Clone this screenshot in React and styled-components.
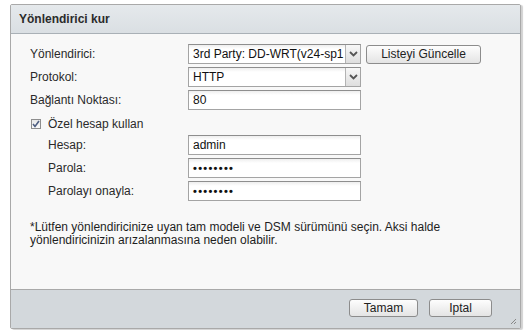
import React from "react";
import styled, { createGlobalStyle } from "styled-components";

const Global = createGlobalStyle`
  html, body { margin: 0; padding: 0; background: #ffffff; }
  body { font-family: "Liberation Sans", Arial, sans-serif; font-size: 12px; color: #222; }
`;

const Page = styled.div`
  width: 529px;
  height: 330px;
  padding: 4px 0 0 10px;
  box-sizing: border-box;
`;

const Window = styled.div`
  width: 511px;
  height: 325px;
  box-sizing: border-box;
  border: 1px solid #a9a9a9;
  border-radius: 2px;
  box-shadow: 2px 1px 1px rgba(0, 0, 0, 0.18);
  display: flex;
  flex-direction: column;
  background: #f8f8f8;
  overflow: hidden;
`;

const Header = styled.div`
  height: 29px;
  box-sizing: border-box;
  border-bottom: 1px solid #a9b0b6;
  background: linear-gradient(#e5e9ec, #dadfe3);
  display: flex;
  align-items: center;
  padding-left: 8px;
  font-weight: bold;
  font-size: 12px;
  color: #2b2b2b;
`;

const Body = styled.div`
  flex: 1;
  padding: 10px 0 0 19px;
  display: flex;
  flex-direction: column;
`;

const Row = styled.div`
  display: flex;
  align-items: center;
  height: 20px;
  margin-top: ${(p) => p.$mt ?? 3}px;
`;

const Label = styled.div`
  width: ${(p) => (p.$indent ? 140 : 158)}px;
  padding-left: ${(p) => (p.$indent ? 18 : 0)}px;
  color: #2a2a2a;
`;

const Field = styled.div`
  width: 173px;
  height: 20px;
  box-sizing: border-box;
  border: 1px solid #a4a4a4;
  border-top-color: #8e8e8e;
  background: linear-gradient(#eeeeee 0px, #ffffff 4px, #ffffff);
  display: flex;
  align-items: center;
  padding-left: 4px;
  color: #111;
  overflow: hidden;
  white-space: nowrap;
`;

const FieldText = styled.span`
  flex: 1;
  overflow: hidden;
`;

const Dots = styled.span`
  font-size: 11px;
  font-weight: bold;
  letter-spacing: 1.3px;
  color: #111;
`;

const Arrow = styled.div`
  width: 15px;
  height: 100%;
  box-sizing: border-box;
  border-left: 1px solid #b3b3b3;
  background: linear-gradient(#f7f7f7, #dedede);
  display: flex;
  align-items: center;
  justify-content: center;
  flex-shrink: 0;
`;

const Button = styled.button`
  height: ${(p) => p.$h || 19}px;
  width: ${(p) => p.$w}px;
  box-sizing: border-box;
  border: 1px solid #8c8c8c;
  border-radius: 3px;
  background: linear-gradient(#fdfdfd, #e4e4e4);
  font-family: "Liberation Sans", Arial, sans-serif;
  font-size: 12px;
  color: #222;
  padding: 0;
  margin-left: ${(p) => p.$ml || 0}px;
`;

const CheckRow = styled.label`
  display: flex;
  align-items: center;
  height: 16px;
  margin-top: 6px;
  color: #2a2a2a;
`;

const Box = styled.span`
  width: 10px;
  height: 10px;
  box-sizing: border-box;
  border: 1px solid #8e8e8e;
  background: linear-gradient(#e8e8e8, #fafafa);
  display: flex;
  align-items: center;
  justify-content: center;
  margin: 0 7px 0 1px;
`;

const Note = styled.p`
  margin: 20px 0 0 0;
  width: 440px;
  line-height: 13px;
  color: #1e1e1e;
`;

const Footer = styled.div`
  height: 39px;
  box-sizing: border-box;
  border-top: 1px solid #a9a9a9;
  background: #d3d8dc;
  display: flex;
  align-items: center;
  justify-content: flex-end;
  padding: 0 28px 2px 0;
  position: relative;
`;

const Grip = styled.svg`
  position: absolute;
  right: 3px;
  bottom: 3px;
`;

const Chevron = () => (
  <svg width="9" height="6" viewBox="0 0 9 6">
    <path d="M1 1 L4.5 4.5 L8 1" fill="none" stroke="#555" strokeWidth="1.8" />
  </svg>
);

export default function App() {
  return (
    <>
      <Global />
      <Page>
        <Window>
          <Header>Yönlendirici kur</Header>
          <Body>
            <Row $mt={0}>
              <Label>Yönlendirici:</Label>
              <Field>
                <FieldText>3rd Party: DD-WRT(v24-sp1</FieldText>
                <Arrow><Chevron /></Arrow>
              </Field>
              <Button $w={115} $ml={5}>Listeyi Güncelle</Button>
            </Row>
            <Row>
              <Label>Protokol:</Label>
              <Field>
                <FieldText>HTTP</FieldText>
                <Arrow><Chevron /></Arrow>
              </Field>
            </Row>
            <Row>
              <Label>Bağlantı Noktası:</Label>
              <Field><FieldText>80</FieldText></Field>
            </Row>
            <CheckRow>
              <Box>
                <svg width="8" height="8" viewBox="0 0 8 8">
                  <path d="M1 4 L3 6.5 L7 1" fill="none" stroke="#4f5f82" strokeWidth="1.6" />
                </svg>
              </Box>
              Özel hesap kullan
            </CheckRow>
            <Row>
              <Label $indent>Hesap:</Label>
              <Field><FieldText>admin</FieldText></Field>
            </Row>
            <Row>
              <Label $indent>Parola:</Label>
              <Field><Dots>••••••••</Dots></Field>
            </Row>
            <Row>
              <Label $indent>Parolayı onayla:</Label>
              <Field><Dots>••••••••</Dots></Field>
            </Row>
            <Note>
              *Lütfen yönlendiricinize uyan tam modeli ve DSM sürümünü seçin. Aksi halde yönlendiricinizin arızalanmasına neden olabilir.
            </Note>
          </Body>
          <Footer>
            <Button $w={69} $h={18}>Tamam</Button>
            <Button $w={63} $h={18} $ml={11}>Iptal</Button>
            <Grip width="7" height="7" viewBox="0 0 7 7">
              <path d="M6 1 L1 6 M6 4 L4 6" stroke="#888" strokeWidth="1" />
            </Grip>
          </Footer>
        </Window>
      </Page>
    </>
  );
}
